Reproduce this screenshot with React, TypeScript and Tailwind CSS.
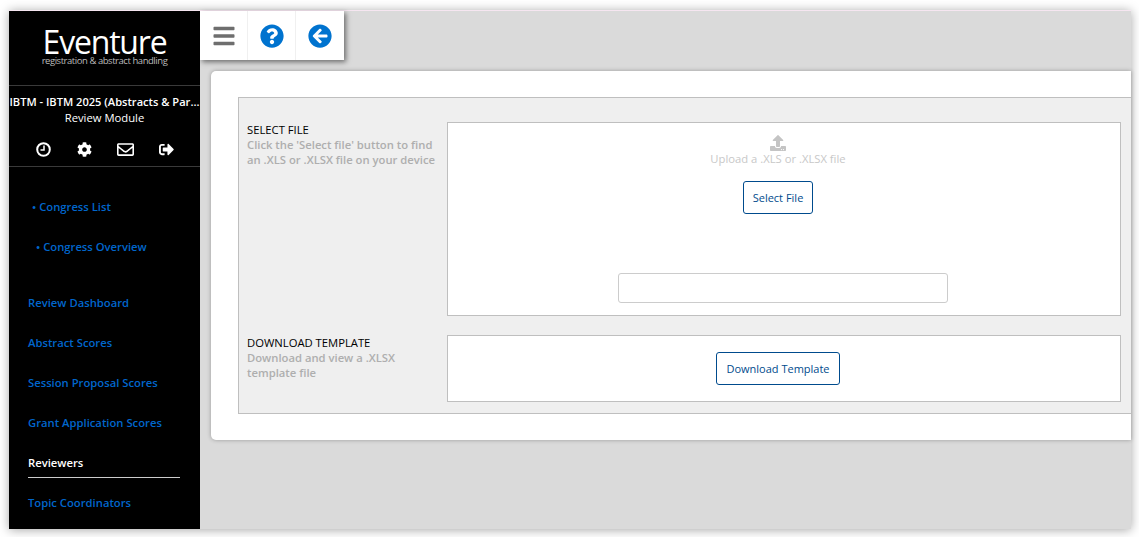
import React from 'react';
import { FaBars, FaQuestionCircle, FaArrowCircleLeft, FaCog, FaRegEnvelope, FaSignOutAlt, FaUpload } from 'react-icons/fa';

const NavLink: React.FC<{ label: string }> = ({ label }) => (
  <div className="mx-[19px] h-10 pt-[7px] font-semibold text-[#0066cc]">{label}</div>
);

const ClockIcon: React.FC = () => (
  <svg width="15" height="15" viewBox="0 0 15 15" fill="none" stroke="currentColor">
    <circle cx="7.5" cy="7.5" r="6.3" strokeWidth="2" />
    <path d="M8 3.5V8H4.5" strokeWidth="1.5" />
  </svg>
);

const App: React.FC = () => {
  return (
    <div className="h-[537px] w-[1139px] overflow-hidden bg-white pt-[10px] pl-[9px] font-['Open_Sans',sans-serif]">
      <div className="flex h-[519px] w-[1122px] border-t border-[#f6e6f1] bg-[#dadada] shadow-[0_1px_10px_rgba(0,0,0,0.35)]">
        {/* Sidebar */}
        <aside className="flex w-[191px] shrink-0 flex-col bg-black text-[11.25px]">
          <div className="flex h-[75px] flex-col items-center border-b border-[#3a3a3a] pt-[15px]">
            <div className="h-[29px] text-[32px] leading-[32px] font-medium tracking-[-1.2px] text-white">Eventure</div>
            <div className="text-[9.5px] leading-[11px] tracking-[-0.45px] text-[#bbbbbb]">registration &amp; abstract handling</div>
          </div>
          <div className="flex h-[81px] flex-col border-b border-[#3a3a3a]">
            <div className="mt-[8px] overflow-hidden text-center text-[11.1px] leading-[16px] font-semibold whitespace-nowrap text-white">
              IBTM - IBTM 2025 (Abstracts &amp; Par...
            </div>
            <div className="text-center leading-[16px] text-white">Review Module</div>
            <div className="mt-[15px] flex items-center justify-center text-white">
              <div className="flex w-[41px] justify-center"><ClockIcon /></div>
              <div className="flex w-[41px] justify-center"><FaCog size={15} /></div>
              <div className="flex w-[41px] justify-center"><FaRegEnvelope size={17} /></div>
              <div className="flex w-[41px] justify-center"><FaSignOutAlt size={15} /></div>
            </div>
          </div>
          <div className="flex flex-col pt-[25px]">
            <div className="ml-[23px] h-10 pt-[7px] font-semibold text-[#0066cc]">• Congress List</div>
            <div className="ml-[27px] h-10 pt-[7px] font-semibold text-[#0066cc]">• Congress Overview</div>
          </div>
          <div className="flex flex-col pt-[16px]">
            <NavLink label="Review Dashboard" />
            <NavLink label="Abstract Scores" />
            <NavLink label="Session Proposal Scores" />
            <NavLink label="Grant Application Scores" />
            <div className="mr-[20px] ml-[19px] h-[30px] border-b border-[#cccccc] pt-[7px] font-semibold text-white">Reviewers</div>
            <div className="mx-[19px] mt-[5px] h-10 pt-[12px] font-semibold text-[#0066cc]">Topic Coordinators</div>
          </div>
        </aside>

        {/* Main */}
        <main className="flex min-w-0 flex-1 flex-col">
          <div className="flex h-[49px] w-[144px] items-center bg-white shadow-[2px_2px_5px_rgba(0,0,0,0.5)]">
            <div className="flex h-full w-[48px] items-center justify-center border-r border-[#f0f0f0] text-[#6e6e6e]">
              <FaBars size={24} />
            </div>
            <div className="flex h-full w-[48px] items-center justify-center border-r border-[#f0f0f0] text-[#0073cf]">
              <FaQuestionCircle size={24} />
            </div>
            <div className="flex h-full w-[48px] items-center justify-center text-[#0073cf]">
              <FaArrowCircleLeft size={24} />
            </div>
          </div>

          <div className="mt-[11px] ml-[11px] h-[369px] rounded-l-[5px] bg-white pt-[26px] pl-[27px] shadow-[0_0_4px_rgba(0,0,0,0.3)]">
            <div className="h-[317px] w-[893px] border border-r-0 border-[#bfbfbf] bg-[#efefef] pt-[24px] pl-[8px]">
              <div className="flex">
                <div className="w-[200px] shrink-0 text-[11.25px] leading-[15px] font-semibold">
                  <div className="font-medium text-black">SELECT FILE</div>
                  <div className="text-[#aeaeae]">Click the 'Select file' button to find</div>
                  <div className="text-[#aeaeae]">an .XLS or .XLSX file on your device</div>
                </div>
                <div className="flex h-[194px] w-[674px] flex-col items-center border border-[#bfbfbf] bg-white pr-[12px]">
                  <FaUpload className="mt-[12px] text-[#c4c4c4]" size={16} />
                  <div className="text-[11.25px] leading-[16px] text-[#c8c8c8]">Upload a .XLS or .XLSX file</div>
                  <button className="mt-[14px] h-[33px] w-[70px] rounded-[3px] border border-[#004b8d] pt-[1px] text-[11px] text-[#004b8d]">
                    Select File
                  </button>
                  <div className="mt-[59px] ml-[10px] h-[30px] w-[330px] rounded-[3px] border border-[#cccccc] bg-white" />
                </div>
              </div>
              <div className="mt-[19px] flex">
                <div className="w-[200px] shrink-0 text-[11.25px] leading-[15px] font-semibold">
                  <div className="font-medium text-black">DOWNLOAD TEMPLATE</div>
                  <div className="text-[#aeaeae]">Download and view a .XLSX</div>
                  <div className="text-[#aeaeae]">template file</div>
                </div>
                <div className="flex h-[67px] w-[674px] items-center justify-center border border-[#bfbfbf] bg-white pr-[12px]">
                  <button className="h-[33px] w-[124px] rounded-[3px] border border-[#004b8d] pt-[1px] text-[11px] text-[#004b8d]">
                    Download Template
                  </button>
                </div>
              </div>
            </div>
          </div>
        </main>
      </div>
    </div>
  );
};

export default App;
